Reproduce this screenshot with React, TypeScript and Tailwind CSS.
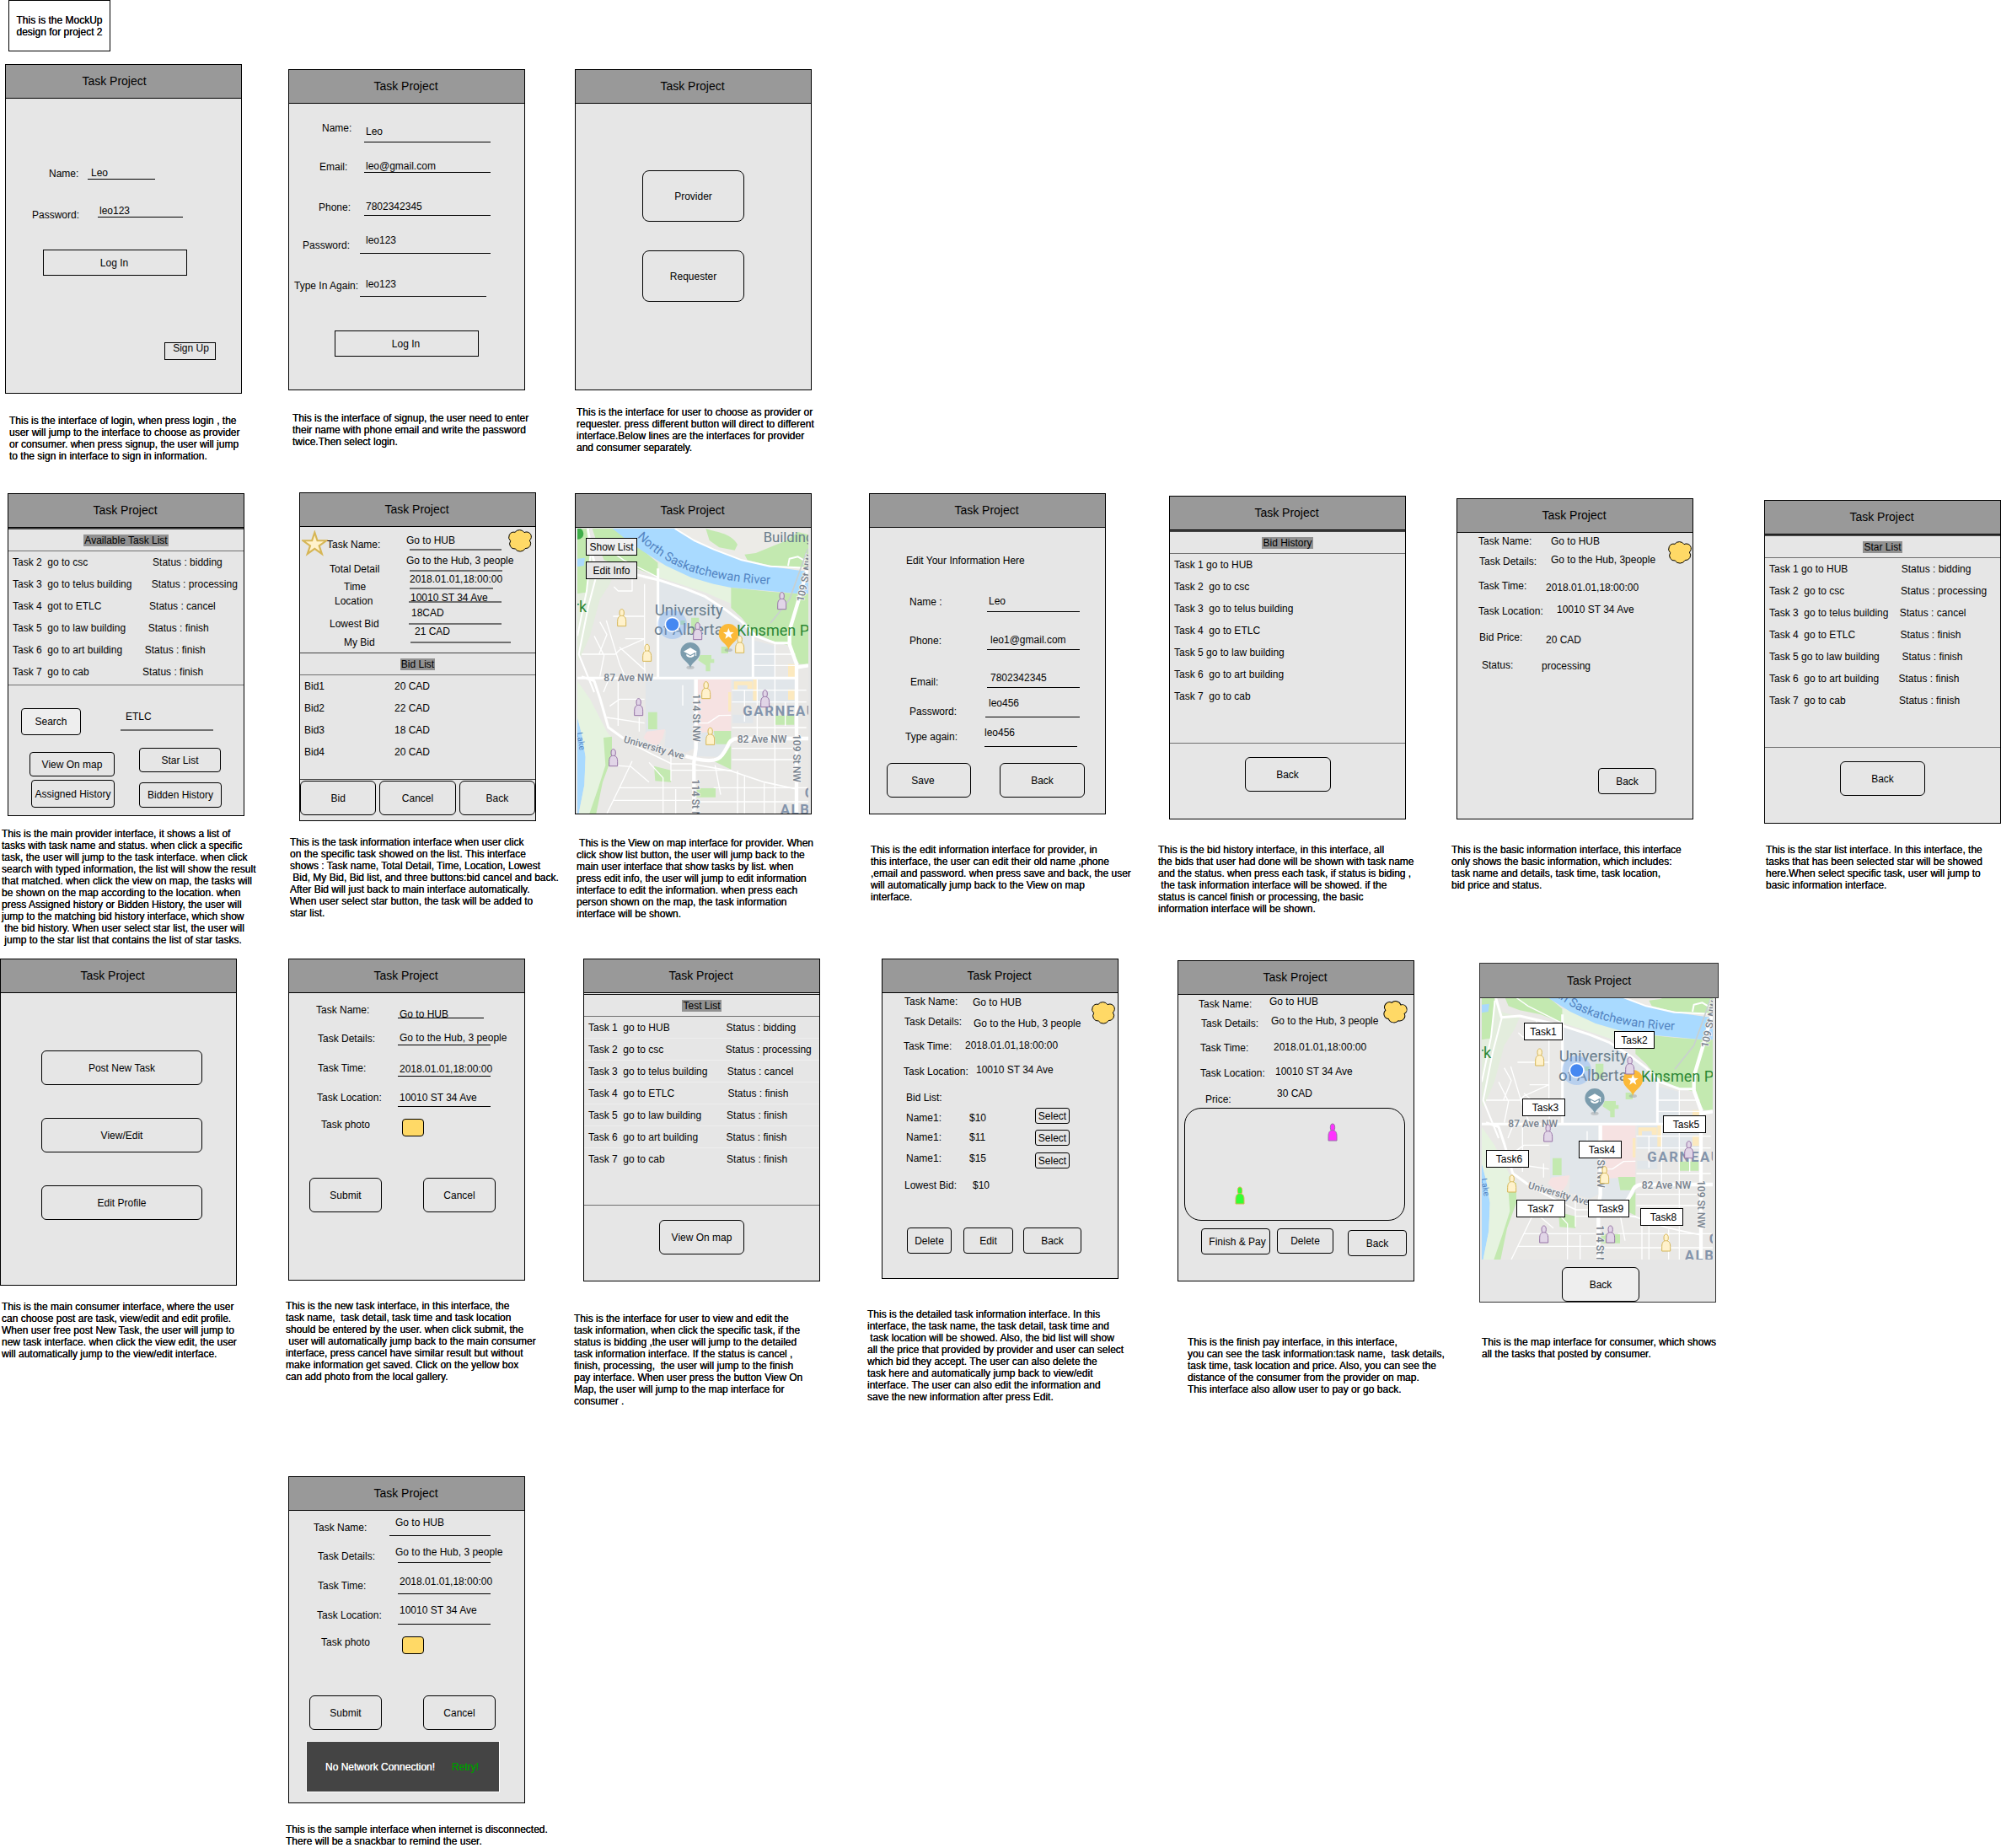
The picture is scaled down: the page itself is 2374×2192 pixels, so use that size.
import type { ReactNode } from "react";

const cx = (...parts: (string | undefined)[]) => parts.filter(Boolean).join(" ");

/* ---------- building blocks ---------- */

function Artboard({ className, children, caption, captionClass }: {
  className?: string; children: ReactNode; caption: string; captionClass: string;
}) {
  return (
    <section className={cx("min-w-0", className)}>
      {children}
      <p className={cx("whitespace-pre [text-shadow:0_0_0_black]", captionClass)}>{caption}</p>
    </section>
  );
}

function Screen({ className, headerClass, bodyClass, children }: {
  className?: string; headerClass?: string; bodyClass?: string; children: ReactNode;
}) {
  return (
    <div className={cx("w-[281px] border border-black bg-[#e6e6e6]", className)}>
      <h2 className={cx("flex h-10 items-center justify-center border-b border-black bg-[#999999] pb-0.5 text-sm", headerClass ?? "pr-0.5")}>
        Task Project
      </h2>
      <div className={cx("relative", bodyClass)}>{children}</div>
    </div>
  );
}

function Btn({ className, children }: { className: string; children: ReactNode }) {
  return (
    <button type="button" className={cx("flex shrink-0 items-center justify-center border border-black whitespace-nowrap", className)}>
      {children}
    </button>
  );
}

function Field({ row, lab, label, value, box, inp, line }: {
  row: string; lab: string; label: string; value: string; box?: string; inp?: string; line: string;
}) {
  return (
    <label className={cx("flex items-end whitespace-nowrap", row)}>
      <span className={cx("shrink-0", lab)}>{label}</span>
      <span className={cx("block", box)}>
        <input type="text" defaultValue={value} className={cx("block h-3.5 w-36 bg-transparent leading-3.5 outline-none", inp)} />
        <span className={cx("block", line)} />
      </span>
    </label>
  );
}

function Info({ row, lab, val, label, value }: { row: string; lab: string; val?: string; label: string; value: string }) {
  return (
    <div className={cx("flex items-end whitespace-nowrap", row)}>
      <dt className={cx("shrink-0", lab)}>{label}</dt>
      <dd className={val}>{value}</dd>
    </div>
  );
}

function TaskList({ title, items, topClass, listClass, itemClass }: {
  title: string; items: string[]; topClass?: string; listClass?: string; itemClass?: string;
}) {
  return (
    <div className={cx("border-b border-[#707070]", topClass)}>
      <h3 className="flex h-[26px] items-center justify-center border-b border-[#707070]">
        <span className="bg-[#919191] px-px">{title}</span>
      </h3>
      <ul className={listClass}>
        {items.map((t) => (
          <li key={t} className={cx("flex h-[26px] items-center whitespace-pre pl-[5px]", itemClass)}>{t}</li>
        ))}
      </ul>
    </div>
  );
}

const thin = "border-b border-black";
const thick = "border-b-2 border-[#707070]";

/* ---------- drawings ---------- */

function Flower({ className }: { className: string }) {
  return (
    <svg viewBox="2 0 86 84" className={cx("h-7 w-[30px]", className)} aria-hidden="true">
      <path
        d="M79 42A19 18 0 0 1 63 71A20 19 0 0 1 28 72A18 18 0 0 1 11 44A18 18 0 0 1 27 13A19 17 0 0 1 60 14A17 17 0 0 1 79 42Z"
        fill="#ffd966" stroke="#000" strokeWidth="3"
      />
    </svg>
  );
}

function Star() {
  return (
    <svg viewBox="0 0 87 82" className="h-[31px] w-[31px]" aria-hidden="true">
      <path d="M43 5L52 32L82 32L58 49L67 76L43 59L19 76L28 49L4 32L34 32Z" fill="#fff2cc" stroke="#d6b656" strokeWidth="6" />
    </svg>
  );
}

type Tone = "yellow" | "purple" | "magenta" | "green";
const tones: Record<Tone, [string, string]> = {
  yellow: ["#fff2cc", "#d6b656"],
  purple: ["#e1d5e7", "#9673a6"],
  magenta: ["#ff33ff", "#9673a6"],
  green: ["#33ff33", "#d6b656"],
};

function Person({ x, y, tone }: { x: number; y: number; tone: Tone }) {
  const [fill, stroke] = tones[tone];
  return (
    <g transform={`translate(${x} ${y})`} fill={fill} stroke={stroke} strokeWidth="3">
      <ellipse cx="0" cy="-17" rx="8" ry="13" />
      <path d="M-15 30V14C-15 0 -10 -7 0 -7S15 0 15 14V30Z" />
    </g>
  );
}

function CampusMap({ top, people, className }: { top: number; people: [number, number, Tone][]; className: string }) {
  return (
    <svg viewBox={`0 ${top} 822 ${1014 - top}`} className={cx("block", className)} fontFamily="Roboto, sans-serif">
      <g transform="translate(-15 -18)">
        <rect x="15" y="18" width="822" height="1014" fill="#e9e8e6" />

        {/* west parkland and riverside */}
        <path d="M15 18H58L62 110L70 160L50 245L15 250Z" fill="#c3e9b0" />
        <path d="M58 110L85 150L150 170L130 215L95 270L60 400L20 490L15 480V250L50 245Z" fill="#e3eddd" />
        <path d="M15 125L42 122L38 150L15 154Z" fill="#a9d9fb" />
        <path d="M68 18H150L215 70L260 105L302 140V190L225 160L150 145L110 130L85 70Z" fill="#c3e9b0" />

        {/* north bank */}
        <path d="M300 18H837V170L720 155L600 130L480 90L420 60L360 18Z" fill="#ecebe7" />
        <path d="M472 18C500 30 560 30 585 75L575 95L520 85L485 60ZM610 110L650 105L760 60L800 30L837 40V160L740 155L680 145L620 130Z" fill="#c3e9b0" />
        <path d="M302 140L380 150L450 195L520 215L562 225V285L470 245L380 215L302 190Z" fill="#e6f3e0" />
        <path d="M140 18H362L420 55L500 92L600 130L700 152L837 172V250H800L700 240L562 228L500 215L420 192L330 150L250 100L200 65Z" fill="#a9daff" />
        <path d="M562 228L700 242L800 250H837V500H805L770 435L700 415L640 385L600 335L562 300Z" fill="#c3e9b0" />

        {/* campus blocks */}
        <path d="M304 200L400 232L470 260L540 300L600 345L640 400V547H304ZM258 555H430V800L400 815L325 795L330 735L258 750ZM435 740H562V790L530 830L440 828ZM640 415L718 435V547H640Z" fill="#e1e6ea" />
        <path d="M568 555H795V640H568ZM568 680H640V710H568Z" fill="#e1e6ea" />
        <path d="M442 555H562V738L440 745Z" fill="#f6e2e2" />
        <path d="M262 740L327 732L318 765L295 800L250 762Z" fill="#f6e2e2" />
        <path d="M572 562H638V588H620V575H585V590H572ZM640 555H655V630H640ZM765 500H790V550H765ZM765 590H788V628H765ZM552 600H562V668H552Z" fill="#fce9bf" />
        <path d="M267 671H299V732H267ZM500 738H562V785H508ZM562 790V875L500 845L535 828ZM288 863L348 878V920L292 916ZM440 942H507V974H440ZM720 683H787V716H720ZM420 335H448V390H420ZM382 345H398V360H382ZM527 438H552V462H527ZM445 487L452 468H492V482H502V496H488V526H472V505Z" fill="#c3e9b0" />

        {/* south-west river */}
        <path d="M15 690L32 755L44 830L40 930L20 1032H15Z" fill="#a9daff" />
        <path d="M15 560L60 625L120 740L135 760L120 860L90 945L60 1032H20L40 930L44 830L32 755L15 690Z" fill="#e6f3e0" />
        <path d="M108 762L138 758V830L105 920L82 1032H58L88 945L115 860Z" fill="#c3e9b0" />

        <g fill="none" stroke="#fff" strokeLinejoin="round">
          <g strokeWidth="4">
            <path d="M254 215V495L256 550M210 180V240H160L145 225M142 330H254M185 410H254M118 345L165 500L185 545M30 465H90L150 465L165 450L254 410M92 465L120 395L95 350M108 600L130 545M165 440L254 520M160 545V720M130 650L165 625H254M120 690L254 710M75 400L110 470L95 545" />
            <path d="M718 430V547M640 465H790M640 505H790M565 593H830M565 635H830M565 726H830M565 800H790M565 840H790M610 593V705M655 555V755M718 555V930M440 710L480 710L520 683L562 682M755 635V720M390 575V648" />
            <path d="M348 800V915M350 878H565M165 940H425M145 985H425M210 845L165 940L120 1032M270 850L320 905V1032M140 860L205 865L270 920M235 690V740M500 940H837M440 990H837M585 880V1032M505 860L525 965M610 900V1032M680 925V1032M718 930V1032M365 945V1032" />
          </g>
          <g strokeWidth="9">
            <path d="M52 18L66 105L85 170L150 165L302 200L400 232L470 260L540 305L600 350L650 400L718 425H775" />
            <path d="M302 160V550M640 400V550" />
            <path d="M15 550H795M30 545L75 560L95 620L125 725L180 765" />
            <path d="M62 110L48 240L15 400M88 165L55 290L20 465L75 600" strokeWidth="6" />
            <path d="M362 18L430 60L500 92L600 130L700 152L837 158M765 150L770 125L800 118L837 140" strokeWidth="6" />
            <path d="M95 70L180 130L300 190" strokeWidth="4" />
            <path d="M180 770L270 815L350 855H420L560 880L680 920L795 945" strokeWidth="5" />
          </g>
          <path d="M437 555V800L430 850V1032M400 828L440 838C520 855 530 830 548 795C555 775 565 765 585 765H837" strokeWidth="13" />
          <path d="M837 150L800 280L770 380V430L795 500V1032M795 512L837 505" strokeWidth="13" />
        </g>
        <path d="M835 90L770 270L702 355" fill="none" stroke="#c9d0cf" strokeWidth="5" />

        <path id={`river${top}`} d="M228 48C290 115 380 165 470 185C560 207 680 222 837 215" fill="none" />
        <text fontSize="44" fill="#5384c2"><textPath href={`#river${top}`}>North Saskatchewan River</textPath></text>
        <g fill="#697d8c">
          <text x="677" y="67" fontSize="50">Building</text>
          <text x="290" y="328" fontSize="56">University</text>
          <text x="288" y="396" fontSize="56">of Alberta</text>
        </g>
        <g fill="#2b8735">
          <text x="582" y="398" fontSize="54">Kinsmen Park</text>
          <text x="3" y="314" fontSize="54">rk</text>
          <circle cx="17" cy="36" r="20" fill="#3fae49" />
        </g>
        <text transform="translate(12 745) rotate(80)" fontSize="30" fill="#5384c2">Lake</text>
        <g fill="#78828d" fontWeight="500" fontSize="36" stroke="#f3f3f3" strokeWidth="5" paintOrder="stroke">
          <text x="109" y="561">87 Ave NW</text>
          <text x="584" y="780">82 Ave NW</text>
          <text transform="translate(426 606) rotate(90)">114 St NW</text>
          <text transform="translate(423 910) rotate(90)">114 St NW</text>
          <text transform="translate(783 750) rotate(90)">109 St NW</text>
          <text transform="translate(820 280) rotate(-78)">109 St NW</text>
          <text transform="translate(178 778) rotate(16)" fontSize="35">University Ave</text>
        </g>
        <g fill="#8394ab" fontWeight="700" fontSize="50" className="tracking-widest">
          <text x="604" y="685">GARNEAU</text>
          <text x="824" y="976">C</text>
          <text x="737" y="1034">ALBERTA</text>
        </g>

        <circle cx="353" cy="359" r="52" fill="#6ea5f5" opacity=".35" />
        <circle cx="353" cy="359" r="25" fill="#4688f1" stroke="#fff" strokeWidth="5" />
        <ellipse cx="553" cy="450" rx="14" ry="6" fill="#8a8f92" opacity=".4" />
        <path d="M553 450C550 428 518 420 518 392A35 35 0 0 1 588 392C588 420 556 428 553 450Z" fill="#fbb938" />
        <path d="M553 372L558 386L572 387L561 396L565 410L553 402L541 410L545 396L534 387L548 386Z" fill="#fff" />
        <ellipse cx="417" cy="512" rx="14" ry="6" fill="#8a8f92" opacity=".4" />
        <path d="M417 514C414 492 382 486 382 458A35 35 0 0 1 452 458C452 486 420 492 417 514Z" fill="#7b9cad" />
        <path d="M417 442L393 455L417 468L440 455ZM403 464V470C410 478 424 478 431 470V464L417 472Z" fill="#fff" />
        <path d="M437 455V471" stroke="#fff" strokeWidth="3" />
      </g>
      {people.map(([x, y, tone]) => <Person key={`${x}-${y}`} x={x} y={y} tone={tone} />)}
    </svg>
  );
}

const providerPeople: [number, number, Tone][] = [
  [158, 317, "yellow"], [248, 442, "yellow"], [578, 412, "yellow"], [458, 575, "yellow"], [473, 739, "yellow"],
  [728, 257, "purple"], [428, 365, "purple"], [218, 635, "purple"], [128, 815, "purple"], [668, 605, "purple"],
];
const consumerPeople: [number, number, Tone][] = [
  [206, 294, "yellow"], [107, 744, "yellow"], [437, 713, "yellow"], [656, 954, "yellow"],
  [527, 324, "purple"], [236, 564, "purple"], [737, 623, "purple"], [221, 924, "purple"], [458, 924, "purple"],
];

const pins: [string, string][] = [
  ["Task1", "left-[50px] top-[29px] w-[46px]"],
  ["Task2", "left-[157px] top-[39px] w-12"],
  ["Task3", "left-12 top-[119px] w-[51px] pl-1"],
  ["Task4", "left-[115px] top-[169px] w-[51px] pl-1"],
  ["Task5", "left-[215px] top-[139px] w-[51px] pl-1"],
  ["Task6", "left-[5px] top-[180px] w-[51px] pl-1"],
  ["Task7", "left-[41px] top-[239px] w-[58px]"],
  ["Task9", "left-[126px] top-[239px] w-[49px] pl-1"],
  ["Task8", "left-[188px] top-[249px] w-[51px] pl-1"],
];

/* ---------- shared screen parts ---------- */

const sp = (n: number) => " ".repeat(n);

function PhotoAndActions({ id }: { id: string }) {
  return (
    <>
      <div className="flex items-start pt-3.5 pl-[38px]">
        <label htmlFor={id} className="w-24 shrink-0">Task photo</label>
        <button id={id} type="button" aria-label="Task photo" className="h-[21px] w-[26px] rounded border border-black bg-[#ffd966]" />
      </div>
      <div className="flex gap-[49px] pt-[49px] pl-6">
        <Btn className="h-[41px] w-[86px] rounded-md">Submit</Btn>
        <Btn className="h-[41px] w-[86px] rounded-md">Cancel</Btn>
      </div>
    </>
  );
}

/* ---------- page ---------- */

export default function App() {
  return (
    <main className="w-full overflow-hidden bg-white font-['Liberation_Sans',Arial,sans-serif] text-xs leading-3.5 text-black">
      <p className="ml-2.5 flex h-[61px] w-[121px] items-center justify-center border border-black text-center whitespace-pre [text-shadow:0_0_0_black]">
        {"This is the MockUp\ndesign for project 2"}
      </p>

      {/* entry screens */}
      <div className="grid grid-cols-[342fr_340fr_1692fr] items-start pt-[15px]">
        <Artboard
          className="pl-1.5"
          captionClass="mt-[25px] pl-[5px]"
          caption={`This is the interface of login, when press login , the
user will jump to the interface to choose as provider
or consumer. when press signup, the user will jump
to the sign in interface to sign in information.`}
        >
          <Screen headerClass="pr-[22px]" bodyClass="pb-[39px]">
            <Field row="h-24 pl-[51px]" lab="w-[46px]" label="Name:" value="Leo" inp="ml-1" line={cx(thin, "w-20")} />
            <Field row="h-[49px] pl-[31px]" lab="w-[78px]" label="Password:" value="leo123" box="mb-1" inp="ml-0.5" line={cx(thin, "w-[101px]")} />
            <Btn className="mt-[34px] ml-11 h-[31px] w-[171px] pr-0.5">Log In</Btn>
            <Btn className="mt-[79px] ml-[188px] h-[21px] w-[61px] pb-2 pl-0.5">Sign Up</Btn>
          </Screen>
        </Artboard>

        <Artboard
          className="pt-1.5"
          captionClass="mt-[26px] pl-[5px]"
          caption={`This is the interface of signup, the user need to enter
their name with phone email and write the password
twice.Then select login.`}
        >
          <Screen bodyClass="pb-[39px]">
            <Field row="h-[46px] pl-[39px]" lab="w-[50px] pb-2.5" label="Name:" value="Leo" inp="ml-0.5" line={cx(thin, "mt-[5px] w-[150px]")} />
            <Field row="h-9 pl-9" lab="w-[53px]" label="Email:" value="leo@gmail.com" inp="ml-0.5" line={cx(thin, "w-[150px]")} />
            <Field row="h-[51px] pl-[35px]" lab="w-[54px] pb-[3px]" label="Phone:" value="7802342345" inp="ml-0.5" line={cx(thin, "mt-[3px] w-[150px]")} />
            <Field row="h-[45px] pl-4" lab="w-[68px] pb-[3px]" label="Password:" value="leo123" inp="ml-[7px]" line={cx(thin, "mt-2 w-[155px]")} />
            <Field row="h-[51px] pl-1.5" lab="w-[78px] pb-1.5" label="Type In Again:" value="leo123" inp="ml-[7px]" line={cx(thin, "mt-[7px] w-[150px]")} />
            <Btn className="mt-10 ml-[54px] h-[31px] w-[171px] pr-0.5">Log In</Btn>
          </Screen>
        </Artboard>

        <Artboard
          className="pt-1.5"
          captionClass="mt-[19px] pl-0.5"
          caption={`This is the interface for user to choose as provider or
requester. press different button will direct to different
interface.Below lines are the interfaces for provider
and consumer separately.`}
        >
          <Screen bodyClass="flex flex-col items-center gap-[34px] pt-[79px] pb-[104px]">
            <Btn className="h-[61px] w-[121px] rounded-lg">Provider</Btn>
            <Btn className="h-[61px] w-[121px] rounded-lg">Requester</Btn>
          </Screen>
        </Artboard>
      </div>

      {/* provider screens */}
      <div className="mt-9 grid grid-cols-[344fr_338fr_349fr_343fr_348fr_371fr_281fr] items-start">
        <Artboard
          className="pt-px pl-0.5"
          captionClass="mt-3.5"
          caption={`This is the main provider interface, it shows a list of
tasks with task name and status. when click a specific
task, the user will jump to the task interface. when click
search with typed information, the list will show the result
that matched. when click the view on map, the tasks will
be shown on the map according to the location. when
press Assigned history or Bidden History, the user will
jump to the matching bid history interface, which show
 the bid history. When user select star list, the user will
 jump to the star list that contains the list of star tasks.`}
        >
          <Screen className="ml-[7px]" bodyClass="pb-[9px]">
            <TaskList
              title="Available Task List"
              topClass="border-t-2 border-t-[#444444]"
              listClass="pb-0.5"
              items={[
                `Task 2  go to csc${sp(23)}Status : bidding`,
                `Task 3  go to telus building${sp(7)}Status : processing`,
                `Task 4  got to ETLC${sp(17)}Status : cancel`,
                `Task 5  go to law building${sp(8)}Status : finish`,
                `Task 6  go to art building${sp(8)}Status : finish`,
                `Task 7  go to cab${sp(19)}Status : finish`,
              ]}
            />
            <div className="flex items-start pt-[27px] pl-[15px]">
              <Btn className="h-8 w-[71px] rounded bg-[#eeeeee]">Search</Btn>
              <label className="ml-[47px] block pt-[3px]">
                <input type="text" aria-label="Search text" defaultValue="ETLC" className="ml-1.5 block h-3.5 w-24 bg-transparent leading-3.5 outline-none" />
                <span className={cx("mt-2 block w-[110px]", thick)} />
              </label>
            </div>
            <div className="flex items-start gap-[29px] pl-[25px]">
              <div className="flex flex-col items-end gap-1 pt-5">
                <Btn className="h-[29px] w-[101px] rounded">View On map</Btn>
                <Btn className="h-[33px] w-[99px] rounded">Assigned History</Btn>
              </div>
              <div className="flex flex-col gap-3 pt-[15px]">
                <Btn className="h-[29px] w-[97px] rounded">Star List</Btn>
                <Btn className="h-[30px] w-[98px] rounded">Bidden History</Btn>
              </div>
            </div>
          </Screen>
        </Artboard>

        <Artboard
          captionClass="mt-[18px]"
          caption={`This is the task information interface when user click
on the specific task showed on the list. This interface
shows : Task name, Total Detail, Time, Location, Lowest
 Bid, My Bid, Bid list, and three buttons:bid cancel and back.
After Bid will just back to main interface automatically.
When user select star button, the task will be added to
star list.`}
        >
          <Screen className="ml-[11px]" bodyClass="pb-1.5">
            <div className="flex items-start pb-[5px]">
              <div className="w-[31px] shrink-0 pt-1 pl-0.5"><Star /></div>
              <div className="w-[215px] shrink-0">
                <Field row="h-7 pl-px" lab="w-[94px]" label="Task Name:" value="Go to HUB" inp="w-28" line={cx(thick, "mt-[3px] ml-1 w-[109px]")} />
                <Field row="h-[29px] pl-1" lab="w-[91px]" label="Total Detail" value="Go to the Hub, 3 people" box="mb-1" line={cx(thick, "mt-1 ml-1 w-[110px]")} />
                <Field row="h-[21px] pl-[21px]" lab="w-[78px]" label="Time" value="2018.01.01,18:00:00" box="mb-1" line={cx(thick, "mt-[3px] w-[99px]")} />
                <Field row="h-[17px] pl-2.5" lab="w-[88px]" label="Location" value="10010 ST 34 Ave" box="mb-[5px]" inp="ml-0.5" line={cx(thick, "-mt-[3px] w-[110px]")} />
                <Field row="h-[27px] pl-1" lab="w-[94px]" label="Lowest Bid" value="18CAD" box="mb-1.5" inp="ml-[3px]" line={cx(thick, "mt-[5px] w-[110px]")} />
                <Field row="h-[22px] pl-[21px]" lab="w-[79px]" label="My Bid" value="21 CAD" box="mb-1.5" inp="ml-[5px]" line={cx(thick, "mt-[5px] w-[119px]")} />
              </div>
              <Flower className="mt-0.5 shrink-0" />
            </div>
            <div className="border-y border-[#444444]">
              <h3 className="flex h-[26px] items-center justify-center border-b border-[#707070]">
                <span className="bg-[#919191] px-px">Bid List</span>
              </h3>
              <table className="mb-[19px] ml-[5px] border-collapse text-left">
                <tbody>
                  {[["Bid1", "20 CAD"], ["Bid2", "22 CAD"], ["Bid3", "18 CAD"], ["Bid4", "20 CAD"]].map(([n, v]) => (
                    <tr key={n} className="h-[26px]">
                      <th scope="row" className="w-[107px] p-0 font-normal">{n}</th>
                      <td className="p-0">{v}</td>
                    </tr>
                  ))}
                </tbody>
              </table>
            </div>
            <div className="grid grid-cols-3 gap-1 pt-px">
              <Btn className="h-[41px] rounded-md">Bid</Btn>
              <Btn className="h-[41px] rounded-md">Cancel</Btn>
              <Btn className="h-[41px] rounded-md">Back</Btn>
            </div>
          </Screen>
        </Artboard>

        <Artboard
          className="pt-px"
          captionClass="mt-[27px] pl-0.5"
          caption={` This is the View on map interface for provider. When
click show list button, the user will jump back to the
main user interface that show tasks by list. when
press edit info, the user will jump to edit information
interface to edit the information. when press each
person shown on the map, the task information
interface will be shown.`}
        >
          <Screen bodyClass="pt-px">
            <div className="relative ml-0.5 w-[274px]">
              <CampusMap top={0} people={providerPeople} className="h-[338px] w-[274px]" />
              <div className="absolute top-0 left-0 flex flex-col gap-[7px] pt-[11px] pl-2.5">
                <Btn className="h-[21px] w-[61px] bg-[#f0f0f0]">Show List</Btn>
                <Btn className="h-[21px] w-[61px] bg-[#e6e6e6]">Edit Info</Btn>
              </div>
            </div>
          </Screen>
        </Artboard>

        <Artboard
          className="pt-px"
          captionClass="mt-[35px] pl-0.5"
          caption={`This is the edit information interface for provider, in
this interface, the user can edit their old name ,phone
,email and password. when press save and back, the user
will automatically jump back to the View on map
interface.`}
        >
          <Screen bodyClass="pb-[19px]">
            <h3 className="pt-8 pl-[43px]">Edit Your Information Here</h3>
            <Field row="h-[54px] pl-[47px]" lab="w-[92px] pb-[5px]" label="Name :" value="Leo" inp="ml-0.5" line={cx(thin, "mt-[5px] w-[110px]")} />
            <Field row="h-[45px] pl-[47px]" lab="w-[92px] pb-1" label="Phone:" value="leo1@gmail.com" inp="ml-1 w-28" line={cx(thin, "mt-1 w-[110px]")} />
            <Field row="h-[45px] pl-12" lab="w-[91px]" label="Email:" value="7802342345" inp="ml-1 w-28" line={cx(thin, "mt-1 w-[110px]")} />
            <Field row="h-[35px] pl-[47px]" lab="w-[90px]" label="Password:" value="leo456" inp="ml-1 w-28" line={cx(thin, "mt-[9px] w-28")} />
            <Field row="h-[35px] pl-[42px]" lab="w-[94px] pb-[5px]" label="Type again:" value="leo456" inp="w-28" line={cx(thin, "mt-[9px] w-[110px]")} />
            <div className="flex gap-[34px] pt-[19px] pl-5">
              <Btn className="h-[41px] w-[100px] rounded-md pr-3.5">Save</Btn>
              <Btn className="h-[41px] w-[101px] rounded-md">Back</Btn>
            </div>
          </Screen>
        </Artboard>

        <Artboard
          className="pt-1"
          captionClass="mt-[29px]"
          caption={`This is the bid history interface, in this interface, all
the bids that user had done will be shown with task name
and the status. when press each task, if status is biding ,
 the task information interface will be showed. if the
status is cancel finish or processing, the basic
information interface will be shown.`}
        >
          <Screen className="ml-[13px]" bodyClass="pb-8">
            <TaskList
              title="Bid History"
              topClass="border-t-2 border-t-[#444444]"
              listClass="pb-[42px]"
              items={[
                "Task 1 go to HUB", "Task 2  go to csc", "Task 3  go to telus building", "Task 4  go to ETLC",
                "Task 5 go to law building", "Task 6  go to art building", "Task 7  go to cab",
              ]}
            />
            <Btn className="mx-auto mt-4 h-[41px] w-[102px] rounded-md">Back</Btn>
          </Screen>
        </Artboard>

        <Artboard
          className="pt-[7px]"
          captionClass="mt-[29px]"
          caption={`This is the basic information interface, this interface
only shows the basic information, which includes:
task name and details, task time, task location,
bid price and status.`}
        >
          <Screen className="ml-1.5" bodyClass="pb-[29px]">
            <dl>
              <Info row="h-[17px] pl-[25px]" lab="w-[86px]" label="Task Name:" value="Go to HUB" />
              <Info row="h-6 pl-[26px]" lab="w-[85px]" val="pb-0.5" label="Task Details:" value="Go to the Hub, 3people" />
              <Info row="h-[31px] pl-[25px]" lab="w-20 pb-0.5" label="Task Time:" value="2018.01.01,18:00:00" />
              <Info row="h-7 pl-[25px]" lab="w-[93px]" val="pb-0.5" label="Task Location:" value="10010 ST 34 Ave" />
              <Info row="h-[34px] pl-[26px]" lab="w-[79px] pb-[3px]" label="Bid Price:" value="20 CAD" />
              <Info row="h-[31px] pl-[29px]" lab="w-[71px] pb-px" label="Status:" value="processing" />
            </dl>
            <Btn className="mt-[114px] ml-[167px] h-[31px] w-[69px] rounded">Back</Btn>
            <Flower className="absolute top-[9px] right-0" />
          </Screen>
        </Artboard>

        <Artboard
          className="pt-[9px]"
          captionClass="mt-6 pl-0.5"
          caption={`This is the star list interface. In this interface, the
tasks that has been selected star will be showed
here.When select specific task, user will jump to
basic information interface.`}
        >
          <Screen bodyClass="pb-8">
            <TaskList
              title="Star List"
              topClass="border-t-2 border-t-[#444444]"
              listClass="pb-[42px]"
              items={[
                `Task 1 go to HUB${sp(19)}Status : bidding`,
                `Task 2  go to csc${sp(20)}Status : processing`,
                `Task 3  go to telus building${sp(4)}Status : cancel`,
                `Task 4  go to ETLC${sp(16)}Status : finish`,
                `Task 5 go to law building${sp(8)}Status : finish`,
                `Task 6  go to art building${sp(7)}Status : finish`,
                `Task 7  go to cab${sp(19)}Status : finish`,
              ]}
            />
            <Btn className="mx-auto mt-4 h-[41px] w-[101px] rounded-md">Back</Btn>
          </Screen>
        </Artboard>
      </div>

      {/* consumer screens */}
      <div className="mt-[15px] grid grid-cols-[339fr_342fr_348fr_368fr_358fr_619fr] items-start">
        <Artboard
          captionClass="mt-[18px] pl-0.5"
          caption={`This is the main consumer interface, where the user
can choose post are task, view/edit and edit profile.
When user free post New Task, the user will jump to
new task interface. when click the view edit, the user
will automatically jump to the view/edit interface.`}
        >
          <Screen headerClass="pr-3.5" bodyClass="flex flex-col gap-[39px] pt-[68px] pb-[77px] pl-12">
            <Btn className="h-[41px] w-[191px] rounded-md">Post New Task</Btn>
            <Btn className="h-[41px] w-[191px] rounded-md">View/Edit</Btn>
            <Btn className="h-[41px] w-[191px] rounded-md">Edit Profile</Btn>
          </Screen>
        </Artboard>

        <Artboard
          captionClass="mt-[23px]"
          caption={`This is the new task interface, in this interface, the
task name,  task detail, task time and task location
should be entered by the user. when click submit, the
 user will automatically jump back to the main consumer
interface, press cancel have similar result but without
make information get saved. Click on the yellow box
can add photo from the local gallery.`}
        >
          <Screen className="ml-[3px]" bodyClass="pb-20">
            <Field row="h-[30px] pl-8" lab="w-[97px] pb-[3px]" label="Task Name:" value="Go to HUB" inp="ml-0.5" line={cx(thin, "-mt-[3px] w-[102px]")} />
            <Field row="h-8 pl-[34px]" lab="w-[95px] pb-px" label="Task Details:" value="Go to the Hub, 3 people" inp="ml-0.5" line={cx(thin, "mt-px w-[110px]")} />
            <Field row="h-[37px] pl-[34px]" lab="w-[95px] pb-[3px]" label="Task Time:" value="2018.01.01,18:00:00" inp="ml-0.5" line={cx(thin, "mt-px w-[110px]")} />
            <Field row="h-9 pl-[33px]" lab="w-24 pb-1" label="Task Location:" value="10010 ST 34 Ave" inp="ml-0.5" line={cx(thin, "mt-[3px] w-[110px]")} />
            <PhotoAndActions id="new-task-photo" />
          </Screen>
        </Artboard>

        <Artboard
          captionClass="mt-[37px]"
          caption={`This is the interface for user to view and edit the
task information, when click the specific task, if the
status is bidding ,the user will jump to the detailed
task information interface. If the status is cancel ,
finish, processing,  the user will jump to the finish
pay interface. When user press the button View On
Map, the user will jump to the map interface for
consumer .`}
        >
          <Screen className="ml-[11px]" bodyClass="pb-[31px] pt-px">
            <TaskList
              title="Test List"
              topClass="border-t border-t-black"
              listClass="pb-[41px]"
              itemClass="border-b border-[#eeeeee] last:border-transparent"
              items={[
                `Task 1  go to HUB${sp(20)}Status : bidding`,
                `Task 2  go to csc${sp(22)}Status : processing`,
                `Task 3  go to telus building${sp(7)}Status : cancel`,
                `Task 4  go to ETLC${sp(19)}Status : finish`,
                `Task 5  go to law building${sp(9)}Status : finish`,
                `Task 6  go to art building${sp(10)}Status : finish`,
                `Task 7  go to cab${sp(22)}Status : finish`,
              ]}
            />
            <Btn className="mx-auto mt-[17px] h-[41px] w-[101px] rounded-md">View On map</Btn>
          </Screen>
        </Artboard>

        <Artboard
          captionClass="mt-[35px]"
          caption={`This is the detailed task information interface. In this
interface, the task name, the task detail, task time and
 task location will be showed. Also, the bid list will show
all the price that provided by provider and user can select
which bid they accept. The user can also delete the
task here and automatically jump back to view/edit
interface. The user can also edit the information and
save the new information after press Edit.`}
        >
          <Screen className="ml-[17px]" bodyClass="pb-[29px]">
            <dl>
              <Info row="h-[18px] pl-[26px]" lab="w-[81px] pb-px" label="Task Name:" value="Go to HUB" />
              <Info row="h-[25px] pl-[26px]" lab="w-[82px] pb-0.5" label="Task Details:" value="Go to the Hub, 3 people" />
              <Info row="h-[27px] pl-[25px]" lab="w-[73px]" val="pb-px" label="Task Time:" value="2018.01.01,18:00:00" />
              <Info row="h-[30px] pl-[25px]" lab="w-[86px]" val="pb-0.5" label="Task Location:" value="10010 ST 34 Ave" />
            </dl>
            <h3 className="pt-[17px] pl-7">Bid List:</h3>
            {[
              ["$10", "pt-[5px]", "pb-0"],
              ["$11", "pt-[7px]", "pb-[3px]"],
              ["$15", "pt-2", "pb-[5px]"],
            ].map(([amount, row, text]) => (
              <div key={amount} className={cx("flex items-end pl-7", row)}>
                <span className={cx("w-[75px]", text)}>Name1:</span>
                <span className={cx("w-[78px]", text)}>{amount}</span>
                <Btn className="h-[19px] w-[41px] rounded-[3px]">Select</Btn>
              </div>
            ))}
            <dl>
              <Info row="h-[27px] pl-[26px]" lab="w-[81px]" label="Lowest Bid:" value="$10" />
            </dl>
            <div className="flex pt-[43px] pl-[29px]">
              <Btn className="h-[31px] w-[53px] rounded">Delete</Btn>
              <Btn className="ml-3.5 h-[31px] w-[59px] rounded">Edit</Btn>
              <Btn className="ml-3 h-[31px] w-[69px] rounded">Back</Btn>
            </div>
            <Flower className="absolute top-[9px] right-0.5" />
          </Screen>
        </Artboard>

        <Artboard
          className="pt-0.5"
          captionClass="mt-[65px] pl-3"
          caption={`This is the finish pay interface, in this interface,
you can see the task information:task name,  task details,
task time, task location and price. Also, you can see the
distance of the consumer from the provider on map.
This interface also allow user to pay or go back.`}
        >
          <Screen bodyClass="pb-[29px]">
            <dl>
              <Info row="h-[18px] pl-6" lab="w-[84px]" val="pb-[3px]" label="Task Name:" value="Go to HUB" />
              <Info row="h-[23px] pl-[27px]" lab="w-[83px]" val="pb-[3px]" label="Task Details:" value="Go to the Hub, 3 people" />
              <Info row="h-[29px] pl-[26px]" lab="w-[87px]" val="pb-px" label="Task Time:" value="2018.01.01,18:00:00" />
              <Info row="h-[30px] pl-[26px]" lab="w-[89px]" val="pb-0.5" label="Task Location:" value="10010 ST 34 Ave" />
              <Info row="h-[31px] pl-8" lab="w-[85px]" val="pb-[7px]" label="Price:" value="30 CAD" />
            </dl>
            <div className="mt-[3px] ml-[7px] w-[262px] rounded-[20px] border border-black">
              <svg viewBox="0 0 780 396" className="block h-[132px] w-[260px]" aria-hidden="true">
                <Person x={525} y={84} tone="magenta" />
                <Person x={195} y={309} tone="green" />
              </svg>
            </div>
            <div className="flex items-start pt-[9px] pl-[27px]">
              <Btn className="h-[31px] w-[82px] rounded pl-1">Finish &amp; Pay</Btn>
              <Btn className="ml-2 h-[30px] w-[67px] rounded">Delete</Btn>
              <Btn className="mt-0.5 ml-[17px] h-[31px] w-[70px] rounded">Back</Btn>
            </div>
            <Flower className="absolute top-1.5 right-[7px] rotate-12" />
          </Screen>
        </Artboard>

        <Artboard
          className="pt-[5px]"
          captionClass="mt-10 pl-[3px]"
          caption={`This is the map interface for consumer, which shows
all the tasks that posted by consumer.`}
        >
          <h2 className="flex h-[42px] w-[284px] items-center justify-center border border-[#333333] bg-[#999999] text-sm">Task Project</h2>
          <div className="w-[281px] border border-t-0 border-[#333333] bg-[#e6e6e6]">
            <div className="relative ml-0.5 w-[274px]">
              <CampusMap top={84} people={consumerPeople} className="h-[310px] w-[274px]" />
              {pins.map(([name, place]) => (
                <Btn key={name} className={cx("absolute h-[21px] bg-white", place)}>{name}</Btn>
              ))}
            </div>
            <Btn className="mt-[9px] ml-[97px] h-[41px] w-[92px] rounded-md bg-[#eeeeee]">Back</Btn>
          </div>
        </Artboard>
      </div>

      {/* offline sample */}
      <div className="mt-[82px] grid grid-cols-[339fr_2035fr] items-start">
        <Artboard
          className="col-start-2"
          captionClass="mt-6"
          caption={`This is the sample interface when internet is disconnected.
There will be a snackbar to remind the user.`}
        >
          <Screen className="ml-[3px]" bodyClass="pb-3">
            <Field row="h-[30px] pl-[29px]" lab="w-[90px] pb-[3px]" label="Task Name:" value="Go to HUB" inp="ml-[7px]" line={cx(thin, "mt-2 w-[120px]")} />
            <Field row="h-8 pl-[34px]" lab="w-[92px] pb-px" label="Task Details:" value="Go to the Hub, 3 people" line={cx(thin, "mt-[5px] ml-[3px] w-[110px]")} />
            <Field row="h-[37px] pl-[34px]" lab="w-[95px] pb-[3px]" label="Task Time:" value="2018.01.01,18:00:00" inp="ml-0.5" line={cx(thin, "mt-[7px] w-[110px]")} />
            <Field row="h-9 pl-[33px]" lab="w-24 pb-1" label="Task Location:" value="10010 ST 34 Ave" inp="ml-0.5" line={cx(thin, "mt-[9px] w-[110px]")} />
            <PhotoAndActions id="offline-task-photo" />
            <div role="status" className="mt-[13px] ml-5 flex h-[61px] w-[230px] items-center gap-5 border border-white bg-[#444444] pl-[22px] whitespace-nowrap text-white [text-shadow:0_0_0_white]">
              <span>No Network Connection!</span>
              <button type="button" className="text-[#009900] [text-shadow:0_0_0_#009900]">Retry!</button>
            </div>
          </Screen>
        </Artboard>
      </div>
    </main>
  );
}
